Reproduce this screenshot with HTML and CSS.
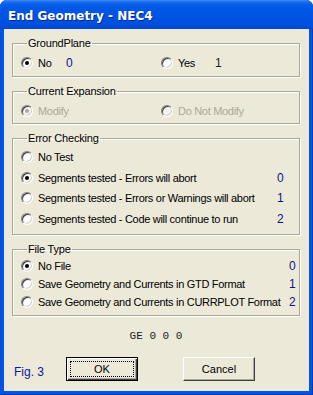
FILE: index.html
```html
<!DOCTYPE html>
<html>
<head>
<meta charset="utf-8">
<link rel="stylesheet" href="styles.css">
</head>
<body>
<div class="window">
  <div class="titlebar"><span class="title">End Geometry - NEC4</span></div>
  <div class="client">
    <fieldset class="group g-ground">
      <legend>GroundPlane</legend>
      <div class="row ground-row">
        <span class="opt"><span class="radio checked"></span><span>No</span></span>
        <span class="num">0</span>
        <span class="opt"><span class="radio"></span><span>Yes</span></span>
        <span class="num plain">1</span>
      </div>
    </fieldset>
    <fieldset class="group g-current disabled">
      <legend>Current Expansion</legend>
      <div class="row ground-row">
        <span class="opt"><span class="radio checked"></span><span>Modify</span></span>
        <span></span>
        <span class="opt"><span class="radio"></span><span>Do Not Modify</span></span>
        <span></span>
      </div>
    </fieldset>
    <fieldset class="group g-error">
      <legend>Error Checking</legend>
      <div class="row err-row"><span class="opt"><span class="radio"></span><span>No Test</span></span><span class="num"></span></div>
      <div class="row err-row"><span class="opt"><span class="radio checked"></span><span>Segments tested - Errors will abort</span></span><span class="num">0</span></div>
      <div class="row err-row"><span class="opt"><span class="radio"></span><span>Segments tested - Errors or Warnings will abort</span></span><span class="num">1</span></div>
      <div class="row err-row"><span class="opt"><span class="radio"></span><span>Segments tested - Code will continue to run</span></span><span class="num">2</span></div>
    </fieldset>
    <fieldset class="group g-file">
      <legend>File Type</legend>
      <div class="row file-row"><span class="opt"><span class="radio checked"></span><span>No File</span></span><span class="num">0</span></div>
      <div class="row file-row"><span class="opt"><span class="radio"></span><span>Save Geometry and Currents in GTD Format</span></span><span class="num">1</span></div>
      <div class="row file-row"><span class="opt"><span class="radio"></span><span>Save Geometry and Currents in CURRPLOT Format</span></span><span class="num">2</span></div>
    </fieldset>
    <div class="card-line">GE 0 0 0</div>
    <div class="bottom">
      <span class="fig">Fig. 3</span>
      <button class="btn default"><span class="focus">OK</span></button>
      <button class="btn">Cancel</button>
    </div>
  </div>
</div>
</body>
</html>
```
FILE: styles.css
```css
html, body {
  margin: 0;
  padding: 0;
  background: #ffffff;
}
.window {
  width: 313px;
  height: 395px;
  box-sizing: border-box;
  background: #0055e5;
  border-radius: 7px 7px 0 0;
  display: flex;
  flex-direction: column;
  font-family: "Liberation Sans", Arial, sans-serif;
  font-size: 11px;
  color: #000;
  box-shadow: inset -1px 0 0 #0037b3, inset 1px 0 0 #0a4ed6, inset 0 -1px 0 #0037b3;
}
.titlebar {
  height: 29px;
  flex: none;
  border-radius: 7px 7px 0 0;
  background: linear-gradient(#3a8cf7 0px, #1b6cf2 2px, #0a5fea 4px, #0058e6 8px, #0054e3 16px, #0050de 24px, #0047d2 29px);
  display: flex;
  align-items: center;
  padding-left: 8px;
}
.title {
  color: #fff;
  font-family: "DejaVu Sans", sans-serif;
  font-weight: bold;
  font-size: 12px;
  text-shadow: 1px 1px 0 #0a2a8a;
  margin-top: 2px;
}
.client {
  flex: 1;
  margin: 0 4px 4px 4px;
  background: #ece9d8;
  padding: 8px 9px 0 8px;
  display: flex;
  flex-direction: column;
}
.group {
  margin: 0 0 8px 0;
  padding: 0 0 4px 8px;
  border: 1px solid #aca899;
  box-shadow: 1px 1px 0 #ffffff, inset 1px 1px 0 #ffffff;
  min-width: 0;
}
.group legend {
  padding: 0 1px;
  margin-left: 6px;
  line-height: 13px;
  color: #000;
  letter-spacing: -0.2px;
}
.g-ground { padding-top: 4px; padding-bottom: 4px; }
.g-current { padding-top: 4px; padding-bottom: 3px; }
.g-error { padding-top: 2px; padding-bottom: 5px; }
.g-file { padding-top: 1px; padding-bottom: 4px; }
.row {
  display: grid;
  align-items: center;
  white-space: nowrap;
}
.ground-row {
  height: 18px;
  grid-template-columns: 45px 95px 54px auto;
}
.err-row {
  height: 20.6px;
  grid-template-columns: 256px auto;
}
.file-row {
  height: 18px;
  grid-template-columns: 268px auto;
}
.opt {
  display: flex;
  align-items: center;
  gap: 5px;
  letter-spacing: -0.3px;
}
.num {
  color: #10108c;
  font-size: 12px;
}
.num.plain { color: #222; }
.radio {
  width: 12px;
  height: 12px;
  box-sizing: border-box;
  border-radius: 50%;
  border: 1px solid;
  border-color: #808080 #ffffff #ffffff #808080;
  background: radial-gradient(circle at 60% 60%, #ffffff 40%, #dcdad0 100%);
  box-shadow: inset 1px 1px 0 #404040, inset -1px -1px 0 #d4d0c8;
  position: relative;
  flex: none;
}
.radio.checked::after {
  content: "";
  position: absolute;
  left: 3px;
  top: 3px;
  width: 4px;
  height: 4px;
  border-radius: 50%;
  background: #000;
}
.disabled .opt { color: #aca899; }
.disabled .radio {
  background: #f4f3ee;
}
.disabled .radio.checked::after { background: #aca899; }
.card-line {
  font-family: "Liberation Mono", "Courier New", monospace;
  font-size: 11px;
  text-align: center;
  margin-top: 6px;
  color: #222;
  white-space: pre;
}
.bottom {
  display: flex;
  align-items: center;
  margin-top: 15px;
  padding-left: 2px;
}
.fig {
  color: #0a1aa0;
  font-size: 12px;
  width: 54px;
  margin-top: 6px;
}
.btn {
  width: 75px;
  height: 24px;
  box-sizing: border-box;
  font-family: "Liberation Sans", Arial, sans-serif;
  font-size: 11px;
  color: #000;
  background: #ece9d8;
  border: 1px solid;
  border-color: #ffffff #404040 #404040 #ffffff;
  box-shadow: inset -1px -1px 0 #aca899;
  padding: 0;
  margin-right: 45px;
}
.btn.default {
  border: 1px solid #000;
  box-shadow: inset 1px 1px 0 #ffffff, inset -1px -1px 0 #404040, inset -2px -2px 0 #aca899;
  padding: 3px;
  display: flex;
}
.focus {
  flex: 1;
  border: 1px dotted #000;
  display: flex;
  align-items: center;
  justify-content: center;
}
```
